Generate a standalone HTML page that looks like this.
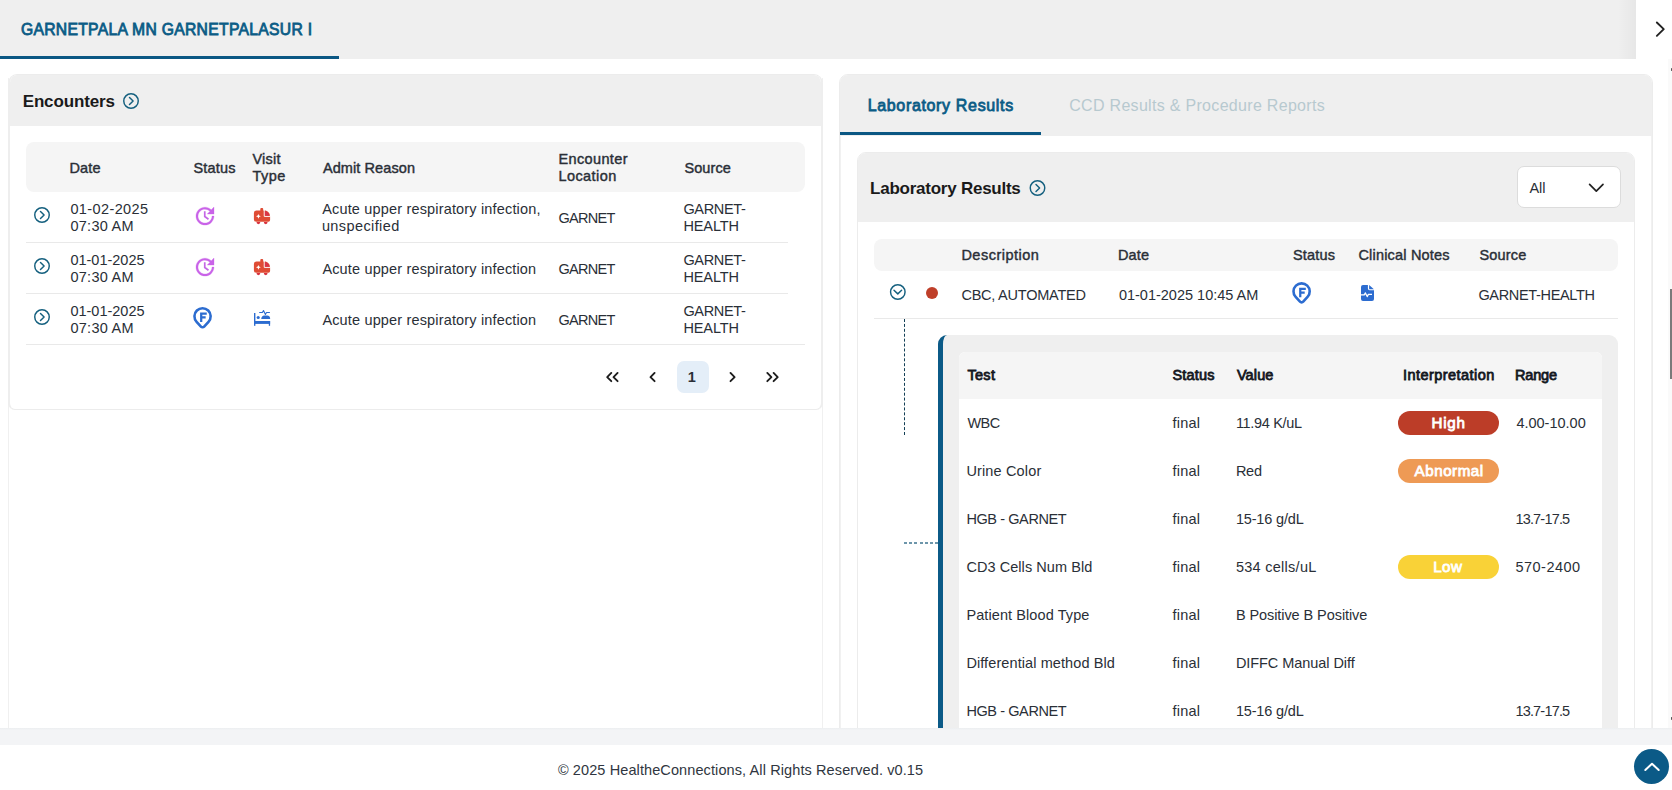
<!DOCTYPE html>
<html><head><meta charset="utf-8"><title>Patient</title>
<style>
html,body{margin:0;padding:0;}
body{width:1672px;height:790px;overflow:hidden;background:#fff;position:relative;font-family:"Liberation Sans",sans-serif;}
.b{position:absolute;box-sizing:border-box;}
.t{position:absolute;white-space:pre;line-height:20px;}
svg{position:absolute;overflow:visible;}

</style></head>
<body>
<!-- top bar -->
<div class="b" style="left:0;top:0;width:1636px;height:59px;background:#efefef;"></div>
<div class="b" style="left:1618px;top:0;width:18px;height:59px;background:linear-gradient(90deg,rgba(0,0,0,0),rgba(0,0,0,0.035));"></div>
<div class="b" style="left:0;top:56px;width:339px;height:3px;background:#0b5783;"></div>

<!-- left card -->
<div class="b" style="left:8px;top:78px;width:815px;height:650px;border-left:1px solid #f0f0f0;border-right:1px solid #f0f0f0;"></div>
<div class="b" style="left:8px;top:74px;width:815px;height:336px;border:1px solid #ececec;border-left:2px solid #eeeeee;border-right:2px solid #eeeeee;border-radius:9px 9px 7px 7px;background:#fff;overflow:hidden;">
  <div class="b" style="left:-2px;top:-1px;width:815px;height:52px;background:#efefef;"></div>
</div>
<div class="b" style="left:26px;top:142px;width:779px;height:50px;background:#f5f5f5;border-radius:8px;"></div>
<div class="b" style="left:26px;top:242px;width:762px;height:1px;background:#e9e9e9;"></div>
<div class="b" style="left:26px;top:293px;width:762px;height:1px;background:#e9e9e9;"></div>
<div class="b" style="left:26px;top:344px;width:779px;height:1px;background:#e9e9e9;"></div>
<div class="b" style="left:677px;top:361px;width:32px;height:32px;background:#e4eef8;border-radius:7px;"></div>

<!-- right card -->
<div class="b" style="left:839px;top:74px;width:814px;height:660px;border:1px solid #ececec;border-radius:9px 9px 0 0;background:#fff;overflow:hidden;">
  <div class="b" style="left:-1px;top:-1px;width:814px;height:62px;background:#efefef;"></div>
  <div class="b" style="left:0px;top:57px;width:201px;height:3px;background:#0b5783;"></div>
</div>
<div class="b" style="left:857px;top:152px;width:778px;height:590px;border:1px solid #ececec;border-radius:9px 9px 0 0;background:#fff;overflow:hidden;">
  <div class="b" style="left:-1px;top:-1px;width:778px;height:70px;background:#efefef;"></div>
</div>
<div class="b" style="left:1516.5px;top:166.2px;width:104px;height:42.3px;background:#fff;border:1px solid #dcdcdc;border-radius:7px;"></div>
<div class="b" style="left:874px;top:239px;width:744px;height:32px;background:#f5f5f5;border-radius:8px;"></div>
<div class="b" style="left:874px;top:318px;width:744px;height:1px;background:#e9e9e9;"></div>
<div class="b" style="left:925.6px;top:286.6px;width:12.6px;height:12.6px;border-radius:50%;background:#bf3f29;"></div>
<!-- dashed connectors -->
<div class="b" style="left:904px;top:319px;width:0;height:116px;border-left:1px dashed #123f55;"></div>
<div class="b" style="left:904px;top:542px;width:34px;height:2px;background:repeating-linear-gradient(90deg,#6d96ab 0,#6d96ab 3px,rgba(255,255,255,0) 3px,rgba(255,255,255,0) 5.2px);"></div>
<!-- nested panel -->
<div class="b" style="left:938px;top:335px;width:680px;height:420px;background:#efefef;border-left:5px solid #0b5a87;border-radius:9px 9px 0 0;"></div>
<div class="b" style="left:959px;top:352px;width:643px;height:400px;background:#fff;border-radius:6px 6px 0 0;overflow:hidden;">
  <div class="b" style="left:0;top:0;width:643px;height:47px;background:#f5f5f5;"></div>
</div>
<!-- badges -->
<div class="b" style="left:1398px;top:411px;width:101px;height:24px;border-radius:12px;background:#bc3d28;"></div>
<div class="b" style="left:1398px;top:459px;width:101px;height:24px;border-radius:12px;background:#ee9a55;"></div>
<div class="b" style="left:1398px;top:555px;width:101px;height:24px;border-radius:12px;background:#f9d237;"></div>

<!-- footer -->
<div class="b" style="left:0;top:728px;width:1672px;height:62px;background:#fff;"></div>
<div class="b" style="left:0;top:728px;width:1672px;height:17px;background:#f3f4f6;"></div>
<div class="b" style="left:0;top:728px;width:1672px;height:2px;background:linear-gradient(180deg,#eceef0,#f3f4f6);"></div>
<div class="b" style="left:1634px;top:749px;width:35px;height:35px;border-radius:50%;background:#0b5a87;"></div>

<div class="b" style="left:840px;top:136px;width:1px;height:592px;background:#f1f1f1;"></div>
<div class="b" style="left:1651px;top:136px;width:1px;height:592px;background:#f1f1f1;"></div>
<!-- scrollbar -->
<div class="b" style="left:1668px;top:59px;width:4px;height:669px;background:#fafafa;"></div>
<div class="b" style="left:1670px;top:289px;width:2px;height:90px;background:#7a7a7a;"></div>

<svg width="1672" height="790" viewBox="0 0 1672 790" style="left:0;top:0;pointer-events:none" ><circle cx="42" cy="215" r="7.25" fill="none" stroke="#15607f" stroke-width="1.45"/><path d="M40.5,211.4 L44.1,215 L40.5,218.6" fill="none" stroke="#15607f" stroke-width="1.45" stroke-linecap="round" stroke-linejoin="round"/>
<circle cx="42" cy="266" r="7.25" fill="none" stroke="#15607f" stroke-width="1.45"/><path d="M40.5,262.4 L44.1,266 L40.5,269.6" fill="none" stroke="#15607f" stroke-width="1.45" stroke-linecap="round" stroke-linejoin="round"/>
<circle cx="42" cy="317" r="7.25" fill="none" stroke="#15607f" stroke-width="1.45"/><path d="M40.5,313.4 L44.1,317 L40.5,320.6" fill="none" stroke="#15607f" stroke-width="1.45" stroke-linecap="round" stroke-linejoin="round"/>
<circle cx="131" cy="101" r="7.25" fill="none" stroke="#15607f" stroke-width="1.45"/><path d="M129.5,97.4 L133.1,101 L129.5,104.6" fill="none" stroke="#15607f" stroke-width="1.45" stroke-linecap="round" stroke-linejoin="round"/>
<circle cx="1037.5" cy="188" r="7.25" fill="none" stroke="#15607f" stroke-width="1.45"/><path d="M1036.0,184.4 L1039.6,188 L1036.0,191.6" fill="none" stroke="#15607f" stroke-width="1.45" stroke-linecap="round" stroke-linejoin="round"/>
<circle cx="897.8" cy="292" r="7.25" fill="none" stroke="#15607f" stroke-width="1.45"/><path d="M894.0,290.3 L897.8,293.9 L901.5999999999999,290.3" fill="none" stroke="#15607f" stroke-width="1.45" stroke-linecap="round" stroke-linejoin="round"/>
<path transform="translate(193,204)" d="M21 10.12h-6.78l2.74-2.82c-2.73-2.7-7.15-2.8-9.88-.1-2.73 2.71-2.73 7.08 0 9.79s7.15 2.71 9.88 0C18.32 15.65 19 14.08 19 12.1h2c0 1.98-.88 4.55-2.64 6.29-3.51 3.48-9.21 3.48-12.72 0-3.5-3.47-3.53-9.11-.02-12.58s9.14-3.47 12.65 0L21 3v7.12z" fill="#c963e8" stroke="#c963e8" stroke-width="0.3"/><path d="M204.75,211.3 V216.5 L208.5,219.2" fill="none" stroke="#c466e6" stroke-width="1.7"/>
<path transform="translate(193,255)" d="M21 10.12h-6.78l2.74-2.82c-2.73-2.7-7.15-2.8-9.88-.1-2.73 2.71-2.73 7.08 0 9.79s7.15 2.71 9.88 0C18.32 15.65 19 14.08 19 12.1h2c0 1.98-.88 4.55-2.64 6.29-3.51 3.48-9.21 3.48-12.72 0-3.5-3.47-3.53-9.11-.02-12.58s9.14-3.47 12.65 0L21 3v7.12z" fill="#c963e8" stroke="#c963e8" stroke-width="0.3"/><path d="M204.75,262.3 V267.5 L208.5,270.2" fill="none" stroke="#c466e6" stroke-width="1.7"/>
<g transform="translate(0,0)"><path d="M256.6,210.5 h3.7 v-1.5 a1,1 0 0 1 1,-1 h0.9 a1,1 0 0 1 1,1 v1.5 h1.3 c3.1,0 5.5,2.6 5.6,5.8 v3.7 a1.7,1.7 0 0 1 -1.7,1.7 h-12.2 a2.3,2.3 0 0 1 -2.3,-2.3 v-6.3 a2.6,2.6 0 0 1 2.7,-2.6 z" fill="#df4c35"/><path d="M264.25,209.8 v6.55 h6.2" fill="none" stroke="#fff" stroke-width="1.0"/><path d="M264.9,211.0 c2.3,0.2 4.1,2.0 4.4,4.7 h-4.4 z" fill="#d93549"/><path d="M258.4,213.9 l0.7,1.7 l1.7,0.7 l-1.7,0.7 l-0.7,1.7 l-0.7,-1.7 l-1.7,-0.7 l1.7,-0.7 z" fill="#fff"/><path d="M256.5,222.1 h3.8 a1.9,2.1 0 0 1 -3.8,0 z" fill="#d8323f"/><path d="M263.8,222.1 h3.8 a1.9,2.1 0 0 1 -3.8,0 z" fill="#d8323f"/></g>
<g transform="translate(0,51)"><path d="M256.6,210.5 h3.7 v-1.5 a1,1 0 0 1 1,-1 h0.9 a1,1 0 0 1 1,1 v1.5 h1.3 c3.1,0 5.5,2.6 5.6,5.8 v3.7 a1.7,1.7 0 0 1 -1.7,1.7 h-12.2 a2.3,2.3 0 0 1 -2.3,-2.3 v-6.3 a2.6,2.6 0 0 1 2.7,-2.6 z" fill="#df4c35"/><path d="M264.25,209.8 v6.55 h6.2" fill="none" stroke="#fff" stroke-width="1.0"/><path d="M264.9,211.0 c2.3,0.2 4.1,2.0 4.4,4.7 h-4.4 z" fill="#d93549"/><path d="M258.4,213.9 l0.7,1.7 l1.7,0.7 l-1.7,0.7 l-0.7,1.7 l-0.7,-1.7 l-1.7,-0.7 l1.7,-0.7 z" fill="#fff"/><path d="M256.5,222.1 h3.8 a1.9,2.1 0 0 1 -3.8,0 z" fill="#d8323f"/><path d="M263.8,222.1 h3.8 a1.9,2.1 0 0 1 -3.8,0 z" fill="#d8323f"/></g>
<path d="M196.60000000000002,321.84000000000003 A8.1,8.1 0 1 1 208.5,321.84000000000003 L204.17000000000002,326.54 A2.2,2.2 0 0 1 200.93,326.54 Z" fill="none" stroke="#2c6cd0" stroke-width="2.6" stroke-linejoin="round"/><path d="M201.20000000000002,322.05 V313.65000000000003 H206.75 M201.20000000000002,317.45000000000005 H205.65" fill="none" stroke="#2c6cd0" stroke-width="2.25"/>
<path d="M1295.6499999999999,296.94 A8.1,8.1 0 1 1 1307.55,296.94 L1303.2199999999998,301.64 A2.2,2.2 0 0 1 1299.98,301.64 Z" fill="none" stroke="#2c6cd0" stroke-width="2.6" stroke-linejoin="round"/><path d="M1300.25,297.15 V288.75 H1305.8 M1300.25,292.55 H1304.6999999999998" fill="none" stroke="#2c6cd0" stroke-width="2.25"/>
<rect x="254" y="313" width="1.4" height="12.8" fill="#2c6cd0"/><rect x="254" y="321" width="16.1" height="2.9" fill="#2c6cd0"/><rect x="268.8" y="321" width="1.3" height="4.8" fill="#2c6cd0"/><circle cx="258.2" cy="317.5" r="1.55" fill="#2c6cd0"/><path d="M261.2,319 c0.2,-2.2 1.4,-3.5 3,-3.5 h3 c1.7,0 2.9,1.2 2.9,2.7 v0.8 z" fill="#2c6cd0"/><path d="M259.2,312.5 h3.2 l1.1,-2 l1.9,3.9 l1.1,-1.9 h3.4" fill="none" stroke="#2c6cd0" stroke-width="1.1" stroke-linejoin="round"/>
<path d="M1363,285 h4.9 v3.6 a1.7,1.7 0 0 0 1.7,1.7 h4.4 v8.7 a2,2 0 0 1 -2,2 h-9 a2,2 0 0 1 -2,-2 v-12 a2,2 0 0 1 2,-2 z" fill="#2c6cd0"/><path d="M1369.1,285.1 L1373.9,289.3 h-4.3 a0.5,0.5 0 0 1 -0.5,-0.5 z" fill="#2c6cd0"/><path d="M1361,294.9 h3.3 l1.1,-2 l1.8,3.7 l1.2,-2.2 h3.6" fill="none" stroke="#fff" stroke-width="1.25" stroke-linejoin="round"/>
<path d="M611.3000000000001,372.95 L607.2,377.05 L611.3000000000001,381.15000000000003" fill="none" stroke="#1d1d1d" stroke-width="1.9" stroke-linecap="round" stroke-linejoin="round"/>
<path d="M617.6,372.95 L613.5,377.05 L617.6,381.15000000000003" fill="none" stroke="#1d1d1d" stroke-width="1.9" stroke-linecap="round" stroke-linejoin="round"/>
<path d="M654.6,372.95 L650.5,377.05 L654.6,381.15000000000003" fill="none" stroke="#1d1d1d" stroke-width="1.9" stroke-linecap="round" stroke-linejoin="round"/>
<path d="M730.5,372.95 L734.6,377.05 L730.5,381.15000000000003" fill="none" stroke="#1d1d1d" stroke-width="1.9" stroke-linecap="round" stroke-linejoin="round"/>
<path d="M767.3,372.95 L771.4,377.05 L767.3,381.15000000000003" fill="none" stroke="#1d1d1d" stroke-width="1.9" stroke-linecap="round" stroke-linejoin="round"/>
<path d="M773.6,372.95 L777.7,377.05 L773.6,381.15000000000003" fill="none" stroke="#1d1d1d" stroke-width="1.9" stroke-linecap="round" stroke-linejoin="round"/>
<path d="M1656.85,22.45 L1663.75,29.15 L1656.85,35.85" fill="none" stroke="#222" stroke-width="1.9" stroke-linecap="round" stroke-linejoin="round"/>
<path d="M1589.6,184.3 L1596.3,191.2 L1603,184.3" fill="none" stroke="#222" stroke-width="1.7" stroke-linecap="round" stroke-linejoin="round"/>
<path d="M1645.3,770 L1652,763.8 L1658.7,770" fill="none" stroke="#fff" stroke-width="2" stroke-linecap="round" stroke-linejoin="round"/>
<rect x="1671" y="68.2" width="1" height="2.7" fill="#585858"/><rect x="1671" y="717.1" width="1" height="2.7" fill="#585858"/>
</svg>
<span class="t" style="left:20.90px;top:20.38px;font-size:15.7px;font-weight:400;-webkit-text-stroke:0.8px #0b5c86;color:#0b5c86;letter-spacing:0.304px">GARNETPALA MN GARNETPALASUR I</span>
<span class="t" style="left:22.70px;top:92.20px;font-size:17px;font-weight:700;color:#1a1a1a;letter-spacing:-0.144px">Encounters</span>
<span class="t" style="left:69.40px;top:158.17px;font-size:14.5px;font-weight:400;-webkit-text-stroke:0.42px #2a2f37;color:#2a2f37;letter-spacing:0.167px">Date</span>
<span class="t" style="left:193.40px;top:158.17px;font-size:14.5px;font-weight:400;-webkit-text-stroke:0.42px #2a2f37;color:#2a2f37;letter-spacing:0.200px">Status</span>
<span class="t" style="left:252.40px;top:149.17px;font-size:14.5px;font-weight:400;-webkit-text-stroke:0.42px #2a2f37;color:#2a2f37;letter-spacing:0.250px">Visit</span>
<span class="t" style="left:252.40px;top:166.17px;font-size:14.5px;font-weight:400;-webkit-text-stroke:0.42px #2a2f37;color:#2a2f37;letter-spacing:0.500px">Type</span>
<span class="t" style="left:322.90px;top:158.17px;font-size:14.5px;font-weight:400;-webkit-text-stroke:0.42px #2a2f37;color:#2a2f37;letter-spacing:0.091px">Admit Reason</span>
<span class="t" style="left:558.40px;top:149.17px;font-size:14.5px;font-weight:400;-webkit-text-stroke:0.42px #2a2f37;color:#2a2f37;letter-spacing:0.375px">Encounter</span>
<span class="t" style="left:558.40px;top:166.17px;font-size:14.5px;font-weight:400;-webkit-text-stroke:0.42px #2a2f37;color:#2a2f37;letter-spacing:0.429px">Location</span>
<span class="t" style="left:684.40px;top:158.17px;font-size:14.5px;font-weight:400;-webkit-text-stroke:0.42px #2a2f37;color:#2a2f37;letter-spacing:0.100px">Source</span>
<span class="t" style="left:70.40px;top:199.17px;font-size:14.5px;font-weight:400;color:#2a2f37;letter-spacing:0.389px">01-02-2025</span>
<span class="t" style="left:70.40px;top:216.17px;font-size:14.5px;font-weight:400;color:#2a2f37;letter-spacing:0.286px">07:30 AM</span>
<span class="t" style="left:322.20px;top:199.17px;font-size:14.5px;font-weight:400;color:#2a2f37;letter-spacing:0.167px">Acute upper respiratory infection,</span>
<span class="t" style="left:321.90px;top:216.17px;font-size:14.5px;font-weight:400;color:#2a2f37;letter-spacing:0.400px">unspecified</span>
<span class="t" style="left:558.40px;top:208.17px;font-size:14.5px;font-weight:400;color:#2a2f37;letter-spacing:-0.700px">GARNET</span>
<span class="t" style="left:683.40px;top:199.17px;font-size:14.5px;font-weight:400;color:#2a2f37;letter-spacing:-0.333px">GARNET-</span>
<span class="t" style="left:683.40px;top:216.17px;font-size:14.5px;font-weight:400;color:#2a2f37;letter-spacing:-0.100px">HEALTH</span>
<span class="t" style="left:70.40px;top:250.17px;font-size:14.5px;font-weight:400;color:#2a2f37;letter-spacing:0.000px">01-01-2025</span>
<span class="t" style="left:70.40px;top:267.17px;font-size:14.5px;font-weight:400;color:#2a2f37;letter-spacing:0.286px">07:30 AM</span>
<span class="t" style="left:322.40px;top:259.17px;font-size:14.5px;font-weight:400;color:#2a2f37;letter-spacing:0.156px">Acute upper respiratory infection</span>
<span class="t" style="left:558.40px;top:259.17px;font-size:14.5px;font-weight:400;color:#2a2f37;letter-spacing:-0.700px">GARNET</span>
<span class="t" style="left:683.40px;top:250.17px;font-size:14.5px;font-weight:400;color:#2a2f37;letter-spacing:-0.333px">GARNET-</span>
<span class="t" style="left:683.40px;top:267.17px;font-size:14.5px;font-weight:400;color:#2a2f37;letter-spacing:-0.100px">HEALTH</span>
<span class="t" style="left:70.40px;top:301.17px;font-size:14.5px;font-weight:400;color:#2a2f37;letter-spacing:0.000px">01-01-2025</span>
<span class="t" style="left:70.40px;top:318.17px;font-size:14.5px;font-weight:400;color:#2a2f37;letter-spacing:0.286px">07:30 AM</span>
<span class="t" style="left:322.40px;top:310.17px;font-size:14.5px;font-weight:400;color:#2a2f37;letter-spacing:0.156px">Acute upper respiratory infection</span>
<span class="t" style="left:558.40px;top:310.17px;font-size:14.5px;font-weight:400;color:#2a2f37;letter-spacing:-0.700px">GARNET</span>
<span class="t" style="left:683.40px;top:301.17px;font-size:14.5px;font-weight:400;color:#2a2f37;letter-spacing:-0.333px">GARNET-</span>
<span class="t" style="left:683.40px;top:318.17px;font-size:14.5px;font-weight:400;color:#2a2f37;letter-spacing:-0.100px">HEALTH</span>
<span class="t" style="left:687.70px;top:367.17px;font-size:14.5px;font-weight:700;color:#2a2f37;letter-spacing:0.000px">1</span>
<span class="t" style="left:867.70px;top:96.18px;font-size:16px;font-weight:400;-webkit-text-stroke:0.8px #0b5c86;color:#0b5c86;letter-spacing:0.659px">Laboratory Results</span>
<span class="t" style="left:1069.20px;top:96.18px;font-size:16px;font-weight:400;color:#b7c9cf;letter-spacing:0.307px">CCD Results & Procedure Reports</span>
<span class="t" style="left:870.10px;top:179.20px;font-size:17px;font-weight:700;color:#1a1a1a;letter-spacing:-0.247px">Laboratory Results</span>
<span class="t" style="left:1529.40px;top:178.17px;font-size:14.5px;font-weight:400;color:#2a2f37;letter-spacing:0.000px">All</span>
<span class="t" style="left:961.40px;top:245.17px;font-size:14.5px;font-weight:400;-webkit-text-stroke:0.42px #2a2f37;color:#2a2f37;letter-spacing:0.500px">Description</span>
<span class="t" style="left:1117.90px;top:245.17px;font-size:14.5px;font-weight:400;-webkit-text-stroke:0.42px #2a2f37;color:#2a2f37;letter-spacing:0.167px">Date</span>
<span class="t" style="left:1292.90px;top:245.17px;font-size:14.5px;font-weight:400;-webkit-text-stroke:0.42px #2a2f37;color:#2a2f37;letter-spacing:0.200px">Status</span>
<span class="t" style="left:1358.40px;top:245.17px;font-size:14.5px;font-weight:400;-webkit-text-stroke:0.42px #2a2f37;color:#2a2f37;letter-spacing:0.192px">Clinical Notes</span>
<span class="t" style="left:1479.40px;top:245.17px;font-size:14.5px;font-weight:400;-webkit-text-stroke:0.42px #2a2f37;color:#2a2f37;letter-spacing:0.200px">Source</span>
<span class="t" style="left:961.40px;top:285.17px;font-size:14.5px;font-weight:400;color:#2a2f37;letter-spacing:-0.231px">CBC, AUTOMATED</span>
<span class="t" style="left:1118.90px;top:285.17px;font-size:14.5px;font-weight:400;color:#2a2f37;letter-spacing:0.000px">01-01-2025 10:45 AM</span>
<span class="t" style="left:1478.40px;top:285.17px;font-size:14.5px;font-weight:400;color:#2a2f37;letter-spacing:-0.333px">GARNET-HEALTH</span>
<span class="t" style="left:967.40px;top:365.17px;font-size:14.5px;font-weight:400;-webkit-text-stroke:0.8px #14181f;color:#14181f;letter-spacing:0.333px">Test</span>
<span class="t" style="left:1172.40px;top:365.17px;font-size:14.5px;font-weight:400;-webkit-text-stroke:0.8px #14181f;color:#14181f;letter-spacing:0.200px">Status</span>
<span class="t" style="left:1236.90px;top:365.17px;font-size:14.5px;font-weight:400;-webkit-text-stroke:0.8px #14181f;color:#14181f;letter-spacing:0.125px">Value</span>
<span class="t" style="left:1402.90px;top:365.17px;font-size:14.5px;font-weight:400;-webkit-text-stroke:0.8px #14181f;color:#14181f;letter-spacing:0.462px">Interpretation</span>
<span class="t" style="left:1514.90px;top:365.17px;font-size:14.5px;font-weight:400;-webkit-text-stroke:0.8px #14181f;color:#14181f;letter-spacing:-0.125px">Range</span>
<span class="t" style="left:967.40px;top:413.17px;font-size:14.5px;font-weight:400;color:#2a2f37;letter-spacing:-0.500px">WBC</span>
<span class="t" style="left:1172.40px;top:413.17px;font-size:14.5px;font-weight:400;color:#2a2f37;letter-spacing:0.250px">final</span>
<span class="t" style="left:1235.90px;top:413.17px;font-size:14.5px;font-weight:400;color:#2a2f37;letter-spacing:-0.333px">11.94 K/uL</span>
<span class="t" style="left:1516.40px;top:413.17px;font-size:14.5px;font-weight:400;color:#2a2f37;letter-spacing:0.000px">4.00-10.00</span>
<span class="t" style="left:966.40px;top:461.17px;font-size:14.5px;font-weight:400;color:#2a2f37;letter-spacing:0.150px">Urine Color</span>
<span class="t" style="left:1172.40px;top:461.17px;font-size:14.5px;font-weight:400;color:#2a2f37;letter-spacing:0.250px">final</span>
<span class="t" style="left:1235.90px;top:461.17px;font-size:14.5px;font-weight:400;color:#2a2f37;letter-spacing:-0.250px">Red</span>
<span class="t" style="left:966.40px;top:509.17px;font-size:14.5px;font-weight:400;color:#2a2f37;letter-spacing:-0.409px">HGB - GARNET</span>
<span class="t" style="left:1172.40px;top:509.17px;font-size:14.5px;font-weight:400;color:#2a2f37;letter-spacing:0.250px">final</span>
<span class="t" style="left:1235.90px;top:509.17px;font-size:14.5px;font-weight:400;color:#2a2f37;letter-spacing:-0.167px">15-16 g/dL</span>
<span class="t" style="left:1515.40px;top:509.17px;font-size:14.5px;font-weight:400;color:#2a2f37;letter-spacing:-0.812px">13.7-17.5</span>
<span class="t" style="left:966.40px;top:557.17px;font-size:14.5px;font-weight:400;color:#2a2f37;letter-spacing:0.062px">CD3 Cells Num Bld</span>
<span class="t" style="left:1172.40px;top:557.17px;font-size:14.5px;font-weight:400;color:#2a2f37;letter-spacing:0.250px">final</span>
<span class="t" style="left:1235.90px;top:557.17px;font-size:14.5px;font-weight:400;color:#2a2f37;letter-spacing:0.273px">534 cells/uL</span>
<span class="t" style="left:1515.40px;top:557.17px;font-size:14.5px;font-weight:400;color:#2a2f37;letter-spacing:0.500px">570-2400</span>
<span class="t" style="left:966.40px;top:605.17px;font-size:14.5px;font-weight:400;color:#2a2f37;letter-spacing:0.088px">Patient Blood Type</span>
<span class="t" style="left:1172.40px;top:605.17px;font-size:14.5px;font-weight:400;color:#2a2f37;letter-spacing:0.250px">final</span>
<span class="t" style="left:1235.90px;top:605.17px;font-size:14.5px;font-weight:400;color:#2a2f37;letter-spacing:-0.075px">B Positive B Positive</span>
<span class="t" style="left:966.40px;top:653.17px;font-size:14.5px;font-weight:400;color:#2a2f37;letter-spacing:0.091px">Differential method Bld</span>
<span class="t" style="left:1172.40px;top:653.17px;font-size:14.5px;font-weight:400;color:#2a2f37;letter-spacing:0.250px">final</span>
<span class="t" style="left:1235.90px;top:653.17px;font-size:14.5px;font-weight:400;color:#2a2f37;letter-spacing:-0.062px">DIFFC Manual Diff</span>
<span class="t" style="left:966.40px;top:701.17px;font-size:14.5px;font-weight:400;color:#2a2f37;letter-spacing:-0.409px">HGB - GARNET</span>
<span class="t" style="left:1172.40px;top:701.17px;font-size:14.5px;font-weight:400;color:#2a2f37;letter-spacing:0.250px">final</span>
<span class="t" style="left:1235.90px;top:701.17px;font-size:14.5px;font-weight:400;color:#2a2f37;letter-spacing:-0.167px">15-16 g/dL</span>
<span class="t" style="left:1515.40px;top:701.17px;font-size:14.5px;font-weight:400;color:#2a2f37;letter-spacing:-0.812px">13.7-17.5</span>
<span class="t" style="left:1431.60px;top:412.97px;font-size:15.2px;font-weight:400;-webkit-text-stroke:0.8px #fff;color:#fff;letter-spacing:0.667px">High</span>
<span class="t" style="left:1414.60px;top:460.97px;font-size:15.2px;font-weight:400;-webkit-text-stroke:0.8px #fff;color:#fff;letter-spacing:0.514px">Abnormal</span>
<span class="t" style="left:1433.20px;top:556.97px;font-size:15.2px;font-weight:400;-webkit-text-stroke:0.8px #fff;color:#fff;letter-spacing:0.400px">Low</span>
<span class="t" style="left:557.90px;top:760.17px;font-size:14.5px;font-weight:400;color:#2f3640;letter-spacing:0.106px">© 2025 HealtheConnections, All Rights Reserved. v0.15</span>

</body></html>
